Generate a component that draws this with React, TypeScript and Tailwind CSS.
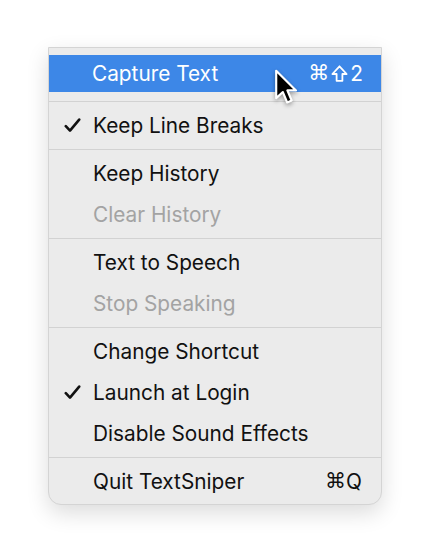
import React from "react";

type Item = {
  label: string;
  checked?: boolean;
  disabled?: boolean;
  shortcut?: string;
};

const groups: Item[][] = [
  [{ label: "Keep Line Breaks", checked: true }],
  [{ label: "Keep History" }, { label: "Clear History", disabled: true }],
  [{ label: "Text to Speech" }, { label: "Stop Speaking", disabled: true }],
  [
    { label: "Change Shortcut" },
    { label: "Launch at Login", checked: true },
    { label: "Disable Sound Effects" },
  ],
  [{ label: "Quit TextSniper", shortcut: "Q" }],
];

const Check = () => (
  <svg width="17" height="15" viewBox="0 0 17 15" className="absolute left-[15px] top-[13px]">
    <path
      d="M1.8 8.2 L6 12.6 L15.2 1.6"
      fill="none"
      stroke="#111"
      strokeWidth="2.6"
      strokeLinecap="round"
      strokeLinejoin="round"
    />
  </svg>
);

const ShiftIcon = () => (
  <svg width="17" height="17" viewBox="0 0 17 17" className="mx-[2px]">
    <path
      d="M8.5 1.3 L15.6 9 L11.4 9 L11.4 15.8 L5.6 15.8 L5.6 9 L1.4 9 Z"
      fill="none"
      stroke="currentColor"
      strokeWidth="1.8"
      strokeLinejoin="round"
    />
  </svg>
);

const Cursor = () => (
  <svg
    width="26"
    height="36"
    viewBox="0 0 14 20"
    className="absolute left-[225px] top-[14px] drop-shadow-[0_2px_2px_rgba(0,0,0,0.35)]"
  >
    <path
      d="M1 1 L1 16.2 L4.7 12.8 L7.1 18.6 L9.6 17.5 L7.2 11.9 L12 11.9 Z"
      fill="#000"
      stroke="#fff"
      strokeWidth="1.2"
      strokeLinejoin="round"
    />
  </svg>
);

const Cmd = () => (
  <span className="font-['DejaVu_Sans',sans-serif] text-[21px] leading-none">⌘</span>
);

const Row = ({ item }: { item: Item }) => (
  <div
    className={`relative h-[41px] flex items-center pl-[44px] pr-[19px] ${
      item.disabled ? "text-[#a3a3a3]" : "text-[#111]"
    }`}
  >
    {item.checked && <Check />}
    <span className="flex-1">{item.label}</span>
    {item.shortcut && (
      <span className="flex items-center">
        <Cmd />
        <span>{item.shortcut}</span>
      </span>
    )}
  </div>
);

const Separator = ({ first = false }: { first?: boolean }) => (
  <div className={`${first ? "mt-[9px]" : "mt-[3px]"} mb-[3px] h-px bg-[#d2d2d2]`} />
);

export default function App() {
  return (
    <div className="w-[430px] h-[560px] bg-white pt-[47px] font-['Inter',sans-serif] text-[20.8px]">
      <div className="relative mx-auto w-[334px] bg-[#ebebeb] border border-[#d4d4d4] rounded-b-[13px] pt-[7px] pb-[2px] shadow-[0_8px_22px_rgba(0,0,0,0.14)]">
        <div className="relative h-[37px] flex items-center bg-[#3d87e7] text-white pl-[43px] pr-[18px]">
          <span className="flex-1">Capture Text</span>
          <span className="flex items-center">
            <Cmd />
            <ShiftIcon />
            <span>2</span>
          </span>
          <Cursor />
        </div>
        {groups.map((g, i) => (
          <div key={i}>
            <Separator first={i === 0} />
            {g.map((it) => (
              <Row key={it.label} item={it} />
            ))}
          </div>
        ))}
      </div>
    </div>
  );
}
